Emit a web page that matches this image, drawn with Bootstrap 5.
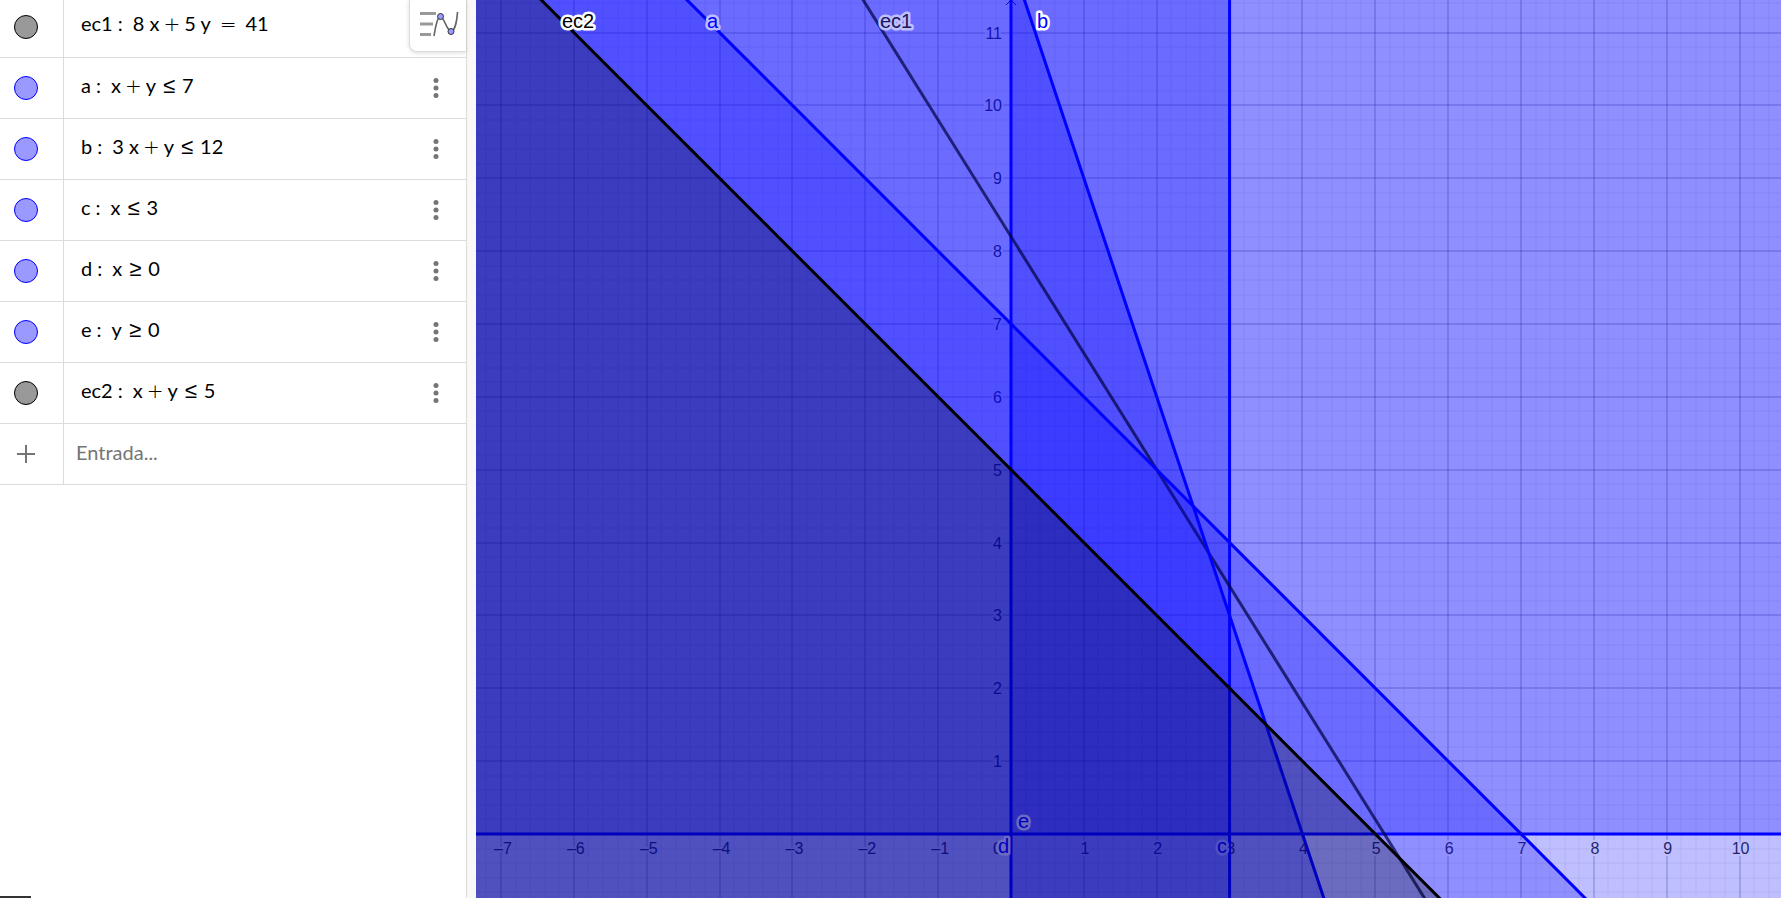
<!DOCTYPE html>
<html lang="es">
<head>
<meta charset="utf-8">
<meta name="viewport" content="width=device-width, initial-scale=1">
<title>Calculadora gráfica</title>
<link rel="stylesheet" href="https://cdn.jsdelivr.net/npm/bootstrap@5.3.0/dist/css/bootstrap.min.css">
<style>
  body { font-family: "Liberation Sans", sans-serif; }
  .algebra { width: 467px; border-right: 1px solid #dcdcdc; }
  .entry { height: 61px; border-bottom: 1px solid #dcdcdc; }
  .entry:first-child { height: 58px; }
  .entry:first-child .marble-cell { padding-bottom: 4px; }
  .entry:first-child .formula { padding-bottom: 11px; }
  .marble-cell { width: 64px; border-right: 1px solid #dcdcdc; padding-right: 12px; }
  .marble { width: 24px; height: 24px; border-radius: 50%; border: 1px solid #00f; background: #99f; padding: 0; }
  .marble.dark { border-color: #000; background: #999; }
  .formula { font-family: Lato, sans-serif; font-size: 20px; line-height: 28px; color: #000; padding-left: 17px; padding-bottom: 7px; white-space: pre; }
  .op { font-family: "DejaVu Sans", sans-serif; font-weight: 200; line-height: 20px; margin: 0 4px; }
  .rel { font-size: 22px; margin: 0 7px; }
  .eq { margin: 0 9px; }
  .colon { margin: 0 10px 0 5px; }
  .more { width: 24px; height: 40px; margin-right: 18px; }
  .field { font-family: Lato, sans-serif; font-size: 20px; color: #757575; padding: 0 12px 4px; }
  .field::placeholder { color: #757575; }
  .toggle { width: 57px; height: 52px; top: 0; right: 0; border: 1px solid #dcdcdc; border-width: 0 0 1px 1px; border-radius: 0 0 0 8px; box-shadow: 0 1px 4px rgba(0,0,0,.15); }
  .splitter { width: 9px; background: #f8f8f8; }
  .corner-mark { width: 31px; height: 2px; left: 0; bottom: 0; background: #333; }
  .plot svg { font-family: "Liberation Sans", sans-serif; }
</style>
<script src="https://cdn.jsdelivr.net/npm/bootstrap@5.3.0/dist/js/bootstrap.bundle.min.js"></script>
</head>
<body class="bg-white">
<div class="d-flex vh-100 overflow-hidden">
  <aside class="algebra flex-shrink-0 position-relative">
    <div id="entries"></div>
    <button class="toggle position-absolute bg-white p-0" aria-label="Vista algebraica">
      <svg class="d-block" width="56" height="51" viewBox="0 0 56 51" fill="none">
        <path d="M10 13.5H26M10 24H23M10 34.5H21" stroke="#999" stroke-width="3"/>
        <path d="M24 36C26 24 28 16 30.500 16.500C34 17 37 31 41 31.500C45 31 47 20 47.500 12" stroke="#666" stroke-width="1.600"/>
        <circle cx="30.500" cy="16.500" r="3" fill="#99f" stroke="#333"/>
        <circle cx="41" cy="31.500" r="3" fill="#99f" stroke="#333"/>
      </svg>
    </button>
    <div class="corner-mark position-absolute"></div>
  </aside>
  <div class="splitter flex-shrink-0"></div>
  <main class="plot flex-grow-1 overflow-hidden">
    <svg id="graph" class="d-block w-100 h-100" role="img" aria-label="Vista gráfica"></svg>
  </main>
</div>
<script>
  // Algebra rows
  const rows = [
    ['ec1', '8 x+5 y=41', true], ['a', 'x+y≤7'], ['b', '3 x+y≤12'], ['c', 'x≤3'],
    ['d', 'x≥0'], ['e', 'y≥0'], ['ec2', 'x+y≤5', true]
  ];
  const kinds = { '+': 'op', '≤': 'op rel', '≥': 'op rel', '=': 'op eq' };
  const math = s => s.replace(/[+≤≥=]/g, c => `<span class="${kinds[c]}">${c}</span>`);
  const dots = '<svg class="d-block mx-auto" width="6" height="22" fill="#757575"><circle cx="3" cy="3.500" r="2.500"/><circle cx="3" cy="11" r="2.500"/><circle cx="3" cy="18.500" r="2.500"/></svg>';
  document.getElementById('entries').innerHTML = rows.map(([name, text, dark], i) => `
    <div class="entry d-flex">
      <div class="marble-cell flex-shrink-0 d-flex align-items-center justify-content-center"><button class="marble${dark ? ' dark' : ''}" aria-label="Mostrar ${name}"></button></div>
      <div class="formula d-flex align-items-center flex-grow-1"><div>${name}<span class="colon">:</span>${math(text)}</div></div>
      ${i ? `<button class="more btn border-0 p-0 align-self-center" aria-label="Más">${dots}</button>` : ''}
    </div>`).join('') + `
    <div class="entry d-flex">
      <label for="new-entry" class="marble-cell flex-shrink-0 d-flex align-items-center justify-content-center" aria-label="Entrada">
        <svg width="18" height="18" stroke="#757575" stroke-width="2"><path d="M0 9H18M9 0V18"/></svg></label>
      <input id="new-entry" class="field form-control border-0 shadow-none rounded-0 flex-grow-1" placeholder="Entrada...">
    </div>`;

  // Coordinate plane: origin at (OX, OY), U pixels per unit
  const graph = document.getElementById('graph');
  const OX = 535, OY = 834, U = 72.86, W = 4000, H = 2400;
  const X = x => OX + x * U, Y = y => OY - y * U;
  let out = '';
  const line = (x1, y1, x2, y2, attrs) => { out += `<line x1="${x1}" y1="${y1}" x2="${x2}" y2="${y2}" ${attrs}/>`; };
  const minor = 'stroke="#003" stroke-opacity=".03" stroke-width="2"', major = 'stroke="#003" stroke-opacity=".16" stroke-width="2"';
  for (let i = -40; i < 240; i++) {
    const x = Math.round(X(i / 5)), y = Math.round(Y(i / 5));
    line(x, 0, x, H, i % 5 ? minor : major);
    line(0, y, W, y, i % 5 ? minor : major);
  }
  line(OX, 0, OX, H, 'stroke="#252525"');
  line(0, OY, W, OY, 'stroke="#252525"');
  out += `<path d="M${OX - 5} 5L${OX} 0L${OX + 5} 5" fill="none" stroke="#252525"/>`;
  const tick = (x, y, t, anchor) => { out += `<text x="${x}" y="${y}" text-anchor="${anchor}" font-size="16" fill="#333" stroke="#fff" stroke-width="4" paint-order="stroke">${t}</text>`; };
  const last = Math.floor((graph.clientWidth - OX - 12) / U);
  for (let i = -7; i <= last; i++) if (i) tick(X(i) + (i < 0 ? 2 : 1), OY + 20, String(i).replace('-', '–'), 'middle');
  tick(OX - 9, OY + 20, '0', 'end');
  for (let i = 1; i < 12; i++) tick(OX - 9, Y(i) + 6, i, 'end');

  const label = (x, y, t, c) => { out += `<text x="${x}" y="${y}" font-size="20" fill="${c}" stroke="#fff" stroke-width="5" stroke-linejoin="round" paint-order="stroke">${t}</text>`; };
  const region = (pts, c) => { out += `<polygon points="${pts.map(p => X(p[0]) + ',' + Y(p[1])).join(' ')}" fill="${c}" fill-opacity=".25"/>`; };
  const edge = (p, q, c, o = 1) => line(X(p[0]), Y(p[1]), X(q[0]), Y(q[1]), `stroke="${c}" stroke-width="3" stroke-opacity="${o}"`);
  const blue = '#00f', B = 60;

  region([[-B, -B], [3, -B], [3, B], [-B, B]], blue); edge([3, -B], [3, B], blue);
  label(741, 853, 'c', blue);
  region([[0, -B], [B, -B], [B, B], [0, B]], blue); edge([0, -B], [0, B], blue);
  label(522, 853, 'd', blue);
  region([[-B, 0], [B, 0], [B, B], [-B, B]], blue); edge([-B, 0], [B, 0], blue);
  label(542, 828, 'e', blue);
  edge([-8, 21], [12, -11], '#000', .7);
  label(404, 28, 'ec1', '#222');
  region([[-B, -B], [B, -B], [B, 7 - B], [-B, 7 + B]], blue); edge([-B, 7 + B], [B, 7 - B], blue);
  label(231, 28, 'a', blue);
  region([[-B, -B], [24, -B], [-16, B], [-B, B]], blue); edge([-16, B], [24, -B], blue);
  label(561, 28, 'b', blue);
  region([[-B, -B], [B, -B], [B, 5 - B], [-B, 5 + B]], '#000'); edge([-B, 5 + B], [B, 5 - B], '#000');
  label(86, 28, 'ec2', '#000');
  graph.innerHTML = out;
</script>
</body>
</html>
